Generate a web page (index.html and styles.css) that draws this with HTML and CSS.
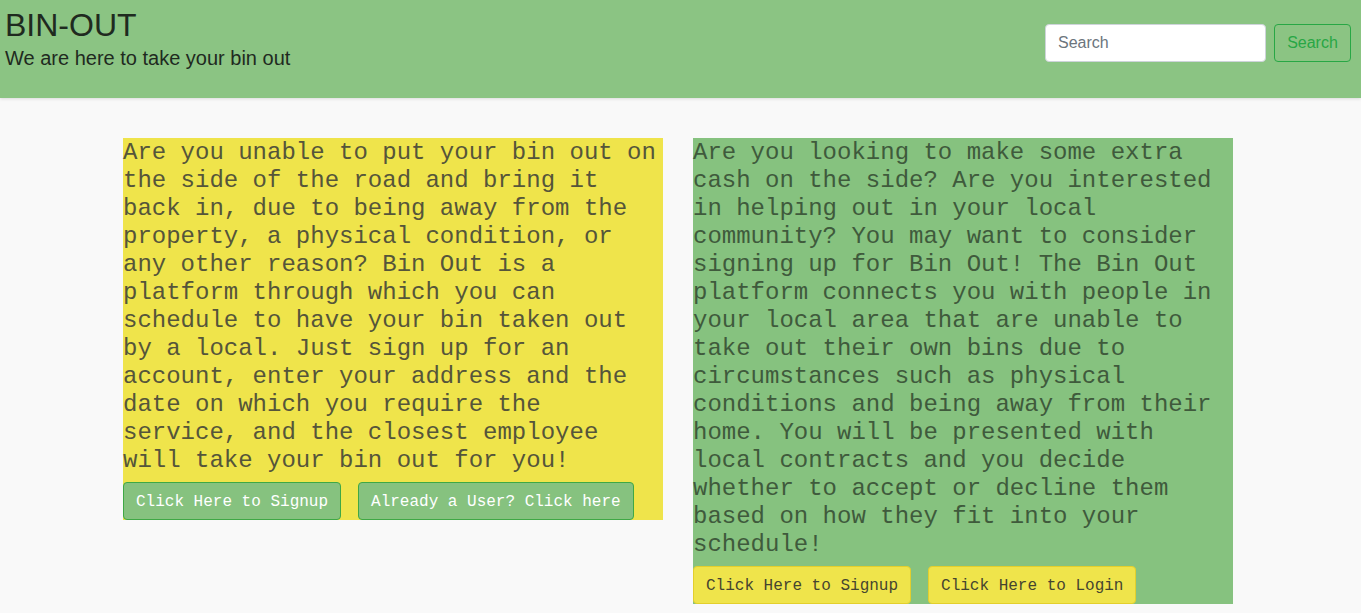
FILE: index.html
```html
<!DOCTYPE html>
<html lang="en">
<head>
<meta charset="utf-8">
<title>BIN-OUT</title>
<link rel="stylesheet" href="styles.css">
</head>
<body>
<header class="topbar">
  <div class="brand">
    <h1 class="brand-title">BIN-OUT</h1>
    <p class="brand-sub">We are here to take your bin out</p>
  </div>
  <form class="search">
    <input class="search-input" type="search" placeholder="Search">
    <button class="search-btn" type="button">Search</button>
  </form>
</header>
<main class="content">
  <section class="card card-yellow">
    <p class="card-text">Are you unable to put your bin out on the side of the road and bring it back in, due to being away from the property, a physical condition, or any other reason? Bin Out is a platform through which you can schedule to have your bin taken out by a local. Just sign up for an account, enter your address and the date on which you require the service, and the closest employee will take your bin out for you!</p>
    <div class="actions">
      <button class="btn btn-green" type="button">Click Here to Signup</button>
      <button class="btn btn-green" type="button">Already a User? Click here</button>
    </div>
  </section>
  <section class="card card-green">
    <p class="card-text">Are you looking to make some extra cash on the side? Are you interested in helping out in your local community? You may want to consider signing up for Bin Out! The Bin Out platform connects you with people in your local area that are unable to take out their own bins due to circumstances such as physical conditions and being away from their home. You will be presented with local contracts and you decide whether to accept or decline them based on how they fit into your schedule!</p>
    <div class="actions">
      <button class="btn btn-yellow" type="button">Click Here to Signup</button>
      <button class="btn btn-yellow" type="button">Click Here to Login</button>
    </div>
  </section>
</main>
</body>
</html>
```
FILE: styles.css
```css
* { box-sizing: border-box; }
html, body { margin: 0; padding: 0; }
body {
  background: #f9f9f9;
  font-family: "Liberation Sans", Arial, sans-serif;
  color: #212529;
}
.topbar {
  height: 98px;
  background: #8bc483;
  display: flex;
  justify-content: space-between;
  align-items: flex-start;
  padding: 0 10px 0 5px;
  box-shadow: 0 1px 3px rgba(0,0,0,0.12);
}
.brand-title {
  margin: 0;
  padding-top: 6px;
  font-size: 32px;
  line-height: 38px;
  font-weight: 400;
  color: #1f2a1f;
}
.brand-sub {
  margin: 2px 0 0;
  font-size: 20px;
  line-height: 24px;
  color: #1f2a1f;
}
.search {
  display: flex;
  gap: 8px;
  margin-top: 24px;
}
.search-input {
  width: 221px;
  height: 38px;
  padding: 6px 12px;
  font-family: "Liberation Sans", Arial, sans-serif;
  font-size: 16px;
  border: 1px solid #ced4da;
  border-radius: 4px;
  background: #fff;
  color: #495057;
  outline: none;
}
.search-input::placeholder { color: #6c757d; }
.search-btn {
  width: 77px;
  height: 38px;
  padding: 6px 12px;
  font-family: "Liberation Sans", Arial, sans-serif;
  font-size: 16px;
  color: #28a745;
  background: transparent;
  border: 1px solid #28a745;
  border-radius: 4px;
}
.content {
  display: flex;
  align-items: flex-start;
  gap: 30px;
  padding: 40px 0 0 123px;
}
.card {
  width: 540px;
}
.card-yellow { background: #efe44b; }
.card-green { background: #86c27f; }
.card-text {
  margin: 0;
  padding-top: 1px;
  margin-bottom: -1px;
  font-family: "Liberation Mono", "DejaVu Sans Mono", monospace;
  font-size: 24px;
  line-height: 28px;
}
.card-yellow .card-text { color: #55553a; }
.card-green .card-text { color: #3f5a3c; }
.actions {
  display: flex;
  gap: 17px;
  margin-top: 8px;
}
.btn {
  height: 38px;
  padding: 7px 12px 5px;
  font-family: "Liberation Mono", "DejaVu Sans Mono", monospace;
  font-size: 16px;
  line-height: 24px;
  border-radius: 4px;
  white-space: nowrap;
}
.btn-green {
  background: #86c27f;
  border: 1px solid #3fa845;
  color: #ffffff;
}
.btn-yellow {
  background: #efe44b;
  border: 1px solid #e3cf2c;
  color: #45452f;
}
```
